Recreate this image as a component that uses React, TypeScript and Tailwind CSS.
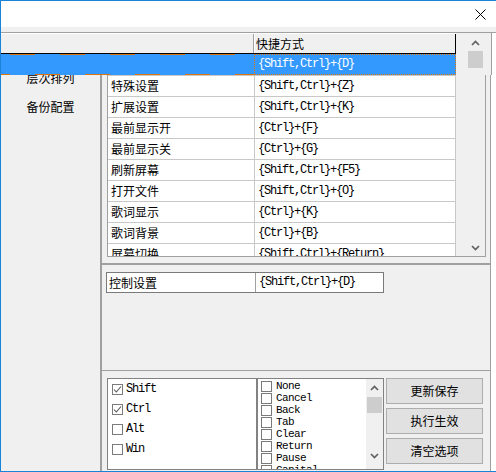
import React from 'react';

const CJK = { fontFamily: '"Noto Sans CJK SC", "Noto Sans", sans-serif' };
const MONO = { fontFamily: '"Liberation Mono", "DejaVu Sans Mono", monospace' };

const rows: [string, string][] = [
  ['特殊设置', '{Shift,Ctrl}+{Z}'],
  ['扩展设置', '{Shift,Ctrl}+{K}'],
  ['最前显示开', '{Ctrl}+{F}'],
  ['最前显示关', '{Ctrl}+{G}'],
  ['刷新屏幕', '{Shift,Ctrl}+{F5}'],
  ['打开文件', '{Shift,Ctrl}+{O}'],
  ['歌词显示', '{Ctrl}+{K}'],
  ['歌词背景', '{Ctrl}+{B}'],
  ['屏幕切换', '{Shift,Ctrl}+{Return}'],
];

const mods = [
  { name: 'Shift', on: true },
  { name: 'Ctrl', on: true },
  { name: 'Alt', on: false },
  { name: 'Win', on: false },
];

const keys = ['None', 'Cancel', 'Back', 'Tab', 'Clear', 'Return', 'Pause', 'Capital'];

const Chevron: React.FC<{ up?: boolean }> = ({ up }) => (
  <svg width="9" height="6" viewBox="0 0 9 6">
    <path
      d={up ? 'M1 5 L4.5 1.5 L8 5' : 'M1 1 L4.5 4.5 L8 1'}
      stroke="#606060"
      strokeWidth="1.7"
      fill="none"
    />
  </svg>
);

const Check: React.FC<{ on?: boolean; size?: number }> = ({ on, size = 11 }) => (
  <div
    className="shrink-0 bg-white border border-[#7a7a7a] flex items-center justify-center"
    style={{ width: size, height: size }}
  >
    {on && (
      <svg width="9" height="9" viewBox="0 0 9 9">
        <path d="M1 4.5 L3.3 7 L8 1.5" stroke="#555" strokeWidth="1.1" fill="none" />
      </svg>
    )}
  </div>
);

export default function App() {
  return (
    <div className="w-[496px] h-[472px] overflow-hidden bg-[#f0f0f0] border-t border-l border-b border-[#1883d7] flex flex-col text-black">
      {/* title bar */}
      <div className="h-[26px] shrink-0 bg-white flex justify-end items-start">
        <svg className="mt-[8px] mr-[10px]" width="11" height="11" viewBox="0 0 11 11">
          <path d="M0.5 0.5 L10.5 10.5 M10.5 0.5 L0.5 10.5" stroke="#000" strokeWidth="1" />
        </svg>
      </div>
      <div className="h-[5px] shrink-0" />
      <div className="h-px shrink-0 bg-[#a0a0a0]" />

      {/* header + selected row */}
      <div className="flex h-[42px] shrink-0">
        <div className="w-[455px] flex flex-col">
          <div className="h-px bg-white" />
          <div className="h-[20px] flex border-b border-black">
            <div className="w-[253px] border-r border-[#a0a0a0]" />
            <div className="flex-1 border-l border-white border-r border-r-black pl-[1px] text-[12px] leading-[19px]" style={CJK}>
              快捷方式
            </div>
          </div>
          <div className="h-[21px] flex bg-[#3399ff]">
            <div className="w-[253px] flex flex-col justify-between">
              <div className="h-px bg-[repeating-linear-gradient(90deg,transparent_0_9px,#d9730d_9px_34px,transparent_34px_50px)]" />
              <div className="h-px bg-[repeating-linear-gradient(90deg,#d9730d_0_9px,transparent_9px_34px,#d9730d_34px_50px)]" />
            </div>
            <div className="flex-1 border border-dotted border-[#e0760f] pl-[3px] text-white text-[12px] tracking-[-1.2px] leading-[19px]" style={MONO}>
              {'{Shift,Ctrl}+{D}'}
            </div>
          </div>
        </div>
        <div className="w-[11px]" />
        <div className="w-[17px] flex flex-col">
          <div className="h-px" />
          <div className="h-[17px] flex items-center justify-center">
            <Chevron up />
          </div>
          <div className="h-[17px] mx-px bg-[#cdcdcd]" />
        </div>
        <div className="w-[7px]" />
        <div className="w-px bg-[#a0a0a0]" />
        <div className="flex-1 bg-white" />
      </div>

      {/* main */}
      <div className="flex flex-1 min-h-0">
        <div className="w-[101px] shrink-0 border-r-2 border-[#a0a0a0] overflow-hidden text-center text-[12px] leading-[12px]" style={CJK}>
          <div className="-mt-[3px]">层次排列</div>
          <div className="mt-[17px]">备份配置</div>
        </div>

        <div className="w-[389px] shrink-0 border-r border-[#a0a0a0] flex flex-col">
          {/* upper: list */}
          <div className="h-[190px] flex flex-col">
            <div className="ml-[5px] w-[379px] h-[182px] border-l border-r border-b border-[#a0a0a0] flex">
              <div className="w-[348px] flex flex-col overflow-hidden">
                {rows.map(([a, b], i) => (
                  <div key={i} className="h-[21px] shrink-0 flex bg-white border-t border-[#c8c8c8]">
                    <div className="w-[147px] border-r border-[#c8c8c8] pl-[3px] text-[12px] leading-[20px]" style={CJK}>
                      {a}
                    </div>
                    <div className="w-[201px] border-r border-[#c8c8c8] pl-[3px] text-[12px] tracking-[-1.2px] leading-[20px]" style={MONO}>
                      {b}
                    </div>
                  </div>
                ))}
              </div>
              <div className="w-[11px]" />
              <div className="w-[17px] flex flex-col justify-end">
                <div className="h-[17px] flex items-center justify-center">
                  <Chevron />
                </div>
              </div>
            </div>
            <div className="flex-1" />
            <div className="h-[2px] bg-[#a0a0a0]" />
          </div>

          {/* middle */}
          <div className="h-[105px] shrink-0">
            <div className="mt-[7px] ml-[4px] w-[278px] h-[21px] border border-[#7a7a7a] bg-white flex">
              <div className="w-[149px] border-r border-[#a0a0a0] pl-[2px] text-[12px] leading-[19px]" style={CJK}>
                控制设置
              </div>
              <div className="flex-1 pl-[3px] text-[12px] tracking-[-1.2px] leading-[19px]" style={MONO}>
                {'{Shift,Ctrl}+{D}'}
              </div>
            </div>
          </div>

          {/* bottom */}
          <div className="flex-1 border-t border-[#a0a0a0] pt-[7px] flex">
            <div className="ml-[5px] w-[150px] h-[92px] border border-[#828282] bg-white flex flex-col">
              {mods.map((m) => (
                <div key={m.name} className="h-[20px] flex items-center pl-[4px] gap-[3px]">
                  <Check on={m.on} />
                  <span className="text-[12px] tracking-[-1.2px]" style={MONO}>
                    {m.name}
                  </span>
                </div>
              ))}
            </div>
            <div className="w-[127px] h-[92px] border border-[#828282] bg-white flex">
              <div className="flex-1 overflow-hidden pt-[1px] pl-[3px] flex flex-col">
                {keys.map((k) => (
                  <div key={k} className="h-[12px] shrink-0 flex items-center gap-[4px]">
                    <Check />
                    <span className="text-[11px] tracking-[-0.6px] leading-[12px]" style={MONO}>
                      {k}
                    </span>
                  </div>
                ))}
              </div>
              <div className="w-[17px] bg-[#f0f0f0] flex flex-col">
                <div className="h-[17px] flex items-center justify-center">
                  <Chevron up />
                </div>
                <div className="mt-[1px] h-[16px] mx-px bg-[#cdcdcd]" />
                <div className="flex-1" />
                <div className="h-[17px] mb-[5px] flex items-center justify-center">
                  <Chevron />
                </div>
              </div>
            </div>
            <div className="ml-[2px] w-[97px] flex flex-col gap-[4px]">
              {['更新保存', '执行生效', '清空选项'].map((t) => (
                <div
                  key={t}
                  className="h-[26px] bg-[#e1e1e1] border border-[#adadad] flex items-center justify-center text-[12px]"
                  style={CJK}
                >
                  {t}
                </div>
              ))}
            </div>
          </div>
        </div>
        <div className="flex-1 bg-white" />
      </div>
    </div>
  );
}
